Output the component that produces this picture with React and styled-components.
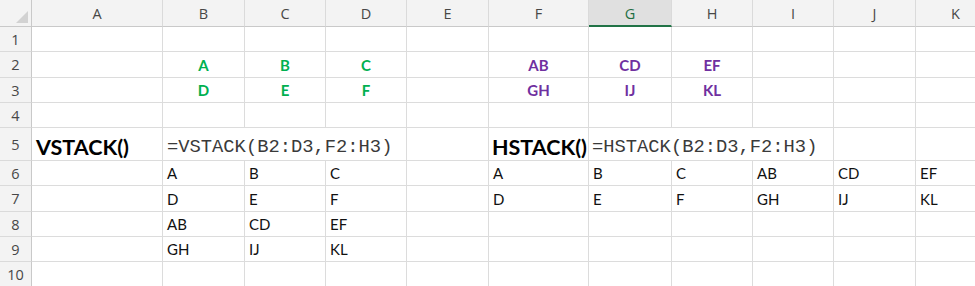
import React from 'react';
import styled, { createGlobalStyle } from 'styled-components';

const GlobalStyle = createGlobalStyle`
  html, body {
    margin: 0;
    padding: 0;
    background: #ffffff;
    overflow: hidden;
  }
  * {
    box-sizing: border-box;
  }
`;

const COLUMNS = ['A', 'B', 'C', 'D', 'E', 'F', 'G', 'H', 'I', 'J', 'K'];
const COL_WIDTHS = [131, 82, 81, 81, 82, 100, 83, 81, 81, 82, 80];
const ROW_HEIGHTS = [25, 26, 25, 25, 33, 25, 26, 25, 25, 25];
const ACTIVE_COL = 'G';

const green = (text) => ({ text, tone: 'green', align: 'center', bold: true });
const purple = (text) => ({ text, tone: 'purple', align: 'center', bold: true });

// sheet contents keyed by row number, then column letter
const SHEET = {
  2: { B: green('A'), C: green('B'), D: green('C'), F: purple('AB'), G: purple('CD'), H: purple('EF') },
  3: { B: green('D'), C: green('E'), D: green('F'), F: purple('GH'), G: purple('IJ'), H: purple('KL') },
  5: {
    A: { text: 'VSTACK()', kind: 'title' },
    B: { text: '=VSTACK(B2:D3,F2:H3)', kind: 'formula', span: 3 },
    F: { text: 'HSTACK()', kind: 'title', tight: true },
    G: { text: '=HSTACK(B2:D3,F2:H3)', kind: 'formula', span: 3, tight: true },
  },
  6: { B: 'A', C: 'B', D: 'C', F: 'A', G: 'B', H: 'C', I: 'AB', J: 'CD', K: 'EF' },
  7: { B: 'D', C: 'E', D: 'F', F: 'D', G: 'E', H: 'F', I: 'GH', J: 'IJ', K: 'KL' },
  8: { B: 'AB', C: 'CD', D: 'EF' },
  9: { B: 'GH', C: 'IJ', D: 'KL' },
};

const App = () => {
  const rows = ROW_HEIGHTS.map((_, i) => i + 1);

  return (
    <>
      <GlobalStyle />
      <Sheet>
        <Corner>
          <svg width="12" height="12" viewBox="0 0 12 12">
            <polygon points="12,0 12,12 0,12" fill="#d2d2d2" />
          </svg>
        </Corner>
        {COLUMNS.map((c) => (
          <ColHeader key={c} $active={c === ACTIVE_COL}>
            {c}
          </ColHeader>
        ))}

        {rows.map((r) => {
          const data = SHEET[r] || {};
          const out = [<RowHeader key={`h${r}`}>{r}</RowHeader>];
          let skip = 0;
          COLUMNS.forEach((c) => {
            if (skip > 0) {
              skip -= 1;
              return;
            }
            let cell = data[c];
            if (typeof cell === 'string') cell = { text: cell };
            cell = cell || {};
            const span = cell.span || 1;
            skip = span - 1;
            out.push(
              <Cell
                key={`${c}${r}`}
                $span={span}
                $align={cell.align}
                $tall={r === 5}
                $tight={cell.tight}
              >
                {cell.kind === 'title' && <Title>{cell.text}</Title>}
                {cell.kind === 'formula' && <Formula>{cell.text}</Formula>}
                {!cell.kind && cell.text && (
                  <Value $tone={cell.tone} $bold={cell.bold}>
                    {cell.text}
                  </Value>
                )}
              </Cell>
            );
          });
          return out;
        })}
      </Sheet>
    </>
  );
};

export default App;

const Sheet = styled.div`
  display: grid;
  grid-template-columns: 32px ${COL_WIDTHS.map((w) => `${w}px`).join(' ')};
  grid-template-rows: 27px ${ROW_HEIGHTS.map((h) => `${h}px`).join(' ')};
  width: max-content;
  background: #ffffff;
`;

const Corner = styled.div`
  background: #f3f3f3;
  border-right: 1px solid #c9c9c9;
  border-bottom: 1px solid #c9c9c9;
  display: flex;
  align-items: flex-end;
  justify-content: flex-end;
  padding: 0 3px 3px 0;
`;

const ColHeader = styled.div`
  display: flex;
  align-items: center;
  justify-content: center;
  padding-top: 1px;
  background: ${(p) => (p.$active ? '#e0e0e0' : '#f3f3f3')};
  color: ${(p) => (p.$active ? '#1f6e43' : '#474747')};
  font-family: 'Open Sans', 'Noto Sans', sans-serif;
  font-size: 14.5px;
  border-right: 1px solid #dadada;
  border-bottom: ${(p) => (p.$active ? '2px solid #217346' : '1px solid #c9c9c9')};
`;

const RowHeader = styled.div`
  display: flex;
  align-items: center;
  justify-content: center;
  background: #f3f3f3;
  color: #474747;
  font-family: 'Open Sans', 'Noto Sans', sans-serif;
  font-size: 14.5px;
  border-right: 1px solid #c9c9c9;
  border-bottom: 1px solid #dadada;
`;

const Cell = styled.div`
  grid-column: span ${(p) => p.$span};
  display: flex;
  align-items: ${(p) => (p.$tall ? 'flex-end' : 'center')};
  justify-content: ${(p) => (p.$align === 'center' ? 'center' : 'flex-start')};
  padding: ${(p) => (p.$tall ? '0 0 2px' : '0')} ${(p) => (p.$tight ? '3px' : '4px')};
  border-right: 1px solid #dcdcdc;
  border-bottom: 1px solid #dcdcdc;
  white-space: nowrap;
  overflow: visible;
`;

const Value = styled.span`
  font-family: Lato, 'Open Sans', sans-serif;
  font-size: 15px;
  font-weight: ${(p) => (p.$bold ? 700 : 400)};
  color: ${(p) =>
    p.$tone === 'green' ? '#00b050' : p.$tone === 'purple' ? '#7030a0' : '#111111'};
`;

const Title = styled.span`
  font-family: Lato, 'Open Sans', sans-serif;
  font-size: 21.5px;
  font-weight: 700;
  color: #000000;
  line-height: 1;
`;

const Formula = styled.span`
  font-family: 'Liberation Mono', 'Courier New', monospace;
  font-size: 18.8px;
  color: #3a3a3a;
  line-height: 1.1;
`;
